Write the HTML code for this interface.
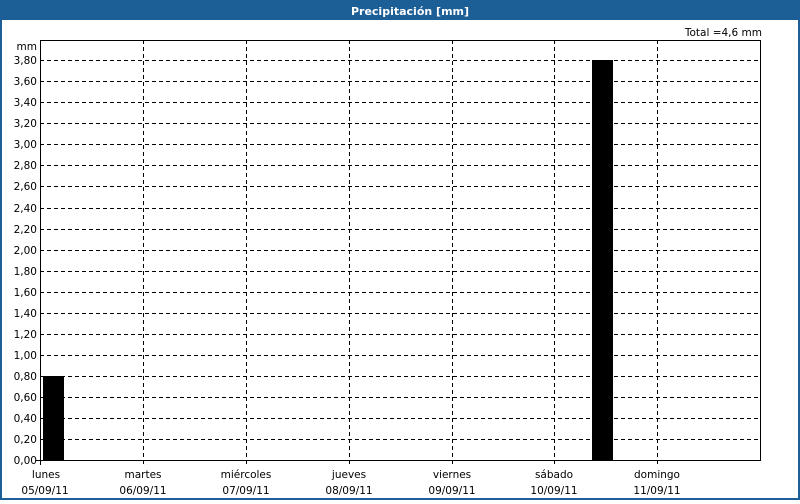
<!DOCTYPE html>
<html><head><style>
body{margin:0;width:800px;height:500px;overflow:hidden;background:#fff;font-family:"DejaVu Sans","Liberation Sans",sans-serif;}
</style></head><body>
<svg width="800" height="500" xmlns="http://www.w3.org/2000/svg" font-family="DejaVu Sans, Liberation Sans, sans-serif" font-size="10.5">
<rect x="0" y="0" width="800" height="500" fill="#fff"/>
<rect x="0" y="0" width="800" height="20" fill="#1c5e96"/>
<rect x="0" y="0" width="2" height="500" fill="#1c5e96"/>
<rect x="798" y="0" width="2" height="500" fill="#1c5e96"/>
<rect x="0" y="498" width="800" height="2" fill="#1c5e96"/>
<text x="410" y="15" text-anchor="middle" fill="#fff" font-weight="bold" font-size="11">Precipitación [mm]</text>
<text x="762" y="36" text-anchor="end" fill="#000">Total =4,6 mm</text>
<text x="37" y="50" text-anchor="end">mm</text>
<g stroke="#000" stroke-width="1" stroke-dasharray="4,3" fill="none">
<path d="M40 60.5H760M40 81.5H760M40 102.5H760M40 123.5H760M40 144.5H760M40 165.5H760M40 186.5H760M40 208.5H760M40 229.5H760M40 250.5H760M40 271.5H760M40 292.5H760M40 313.5H760M40 334.5H760M40 355.5H760M40 376.5H760M40 397.5H760M40 418.5H760M40 439.5H760"/>
<path d="M143.5 40V465M246.5 40V465M349.5 40V465M452.5 40V465M554.5 40V465M657.5 40V465"/>
</g>
<rect x="43" y="376" width="21" height="85" fill="#000"/>
<rect x="592" y="60" width="21" height="401" fill="#000"/>
<path d="M40.5 40V465M40 40.5H760.5V460.5H36" stroke="#000" fill="none"/>
<g text-anchor="end">
<text x="37" y="64">3,80</text><text x="37" y="85">3,60</text><text x="37" y="106">3,40</text><text x="37" y="127">3,20</text><text x="37" y="148">3,00</text><text x="37" y="169">2,80</text><text x="37" y="190">2,60</text><text x="37" y="212">2,40</text><text x="37" y="233">2,20</text><text x="37" y="254">2,00</text><text x="37" y="275">1,80</text><text x="37" y="296">1,60</text><text x="37" y="317">1,40</text><text x="37" y="338">1,20</text><text x="37" y="359">1,00</text><text x="37" y="380">0,80</text><text x="37" y="401">0,60</text><text x="37" y="422">0,40</text><text x="37" y="443">0,20</text><text x="37" y="464">0,00</text>
</g>
<g text-anchor="middle">
<text x="46" y="478">lunes</text><text x="45" y="494">05/09/11</text>
<text x="143" y="478">martes</text><text x="143" y="494">06/09/11</text>
<text x="246" y="478">miércoles</text><text x="246" y="494">07/09/11</text>
<text x="349" y="478">jueves</text><text x="349" y="494">08/09/11</text>
<text x="452" y="478">viernes</text><text x="452" y="494">09/09/11</text>
<text x="554" y="478">sábado</text><text x="554" y="494">10/09/11</text>
<text x="657" y="478">domingo</text><text x="657" y="494">11/09/11</text>
</g>
</svg>
</body></html>
